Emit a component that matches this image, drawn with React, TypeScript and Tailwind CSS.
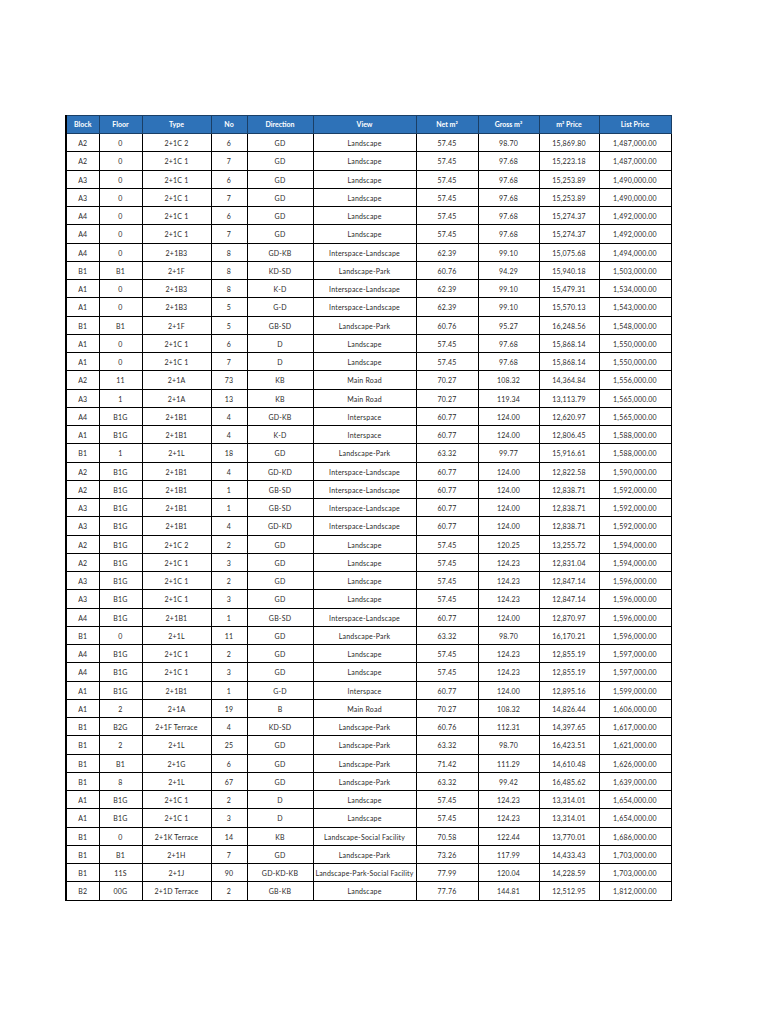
const headers = ['Block', 'Floor', 'Type', 'No', 'Direction', 'View', 'Net m²', 'Gross m²', 'm² Price', 'List Price'];
const widths = ['w-[33px]', 'w-[43px]', 'w-[69px]', 'w-[36px]', 'w-[66px]', 'w-[103px]', 'w-[62px]', 'w-[61px]', 'w-[60px]', 'w-[72px]'];

const rows: string[][] = [
  ['A2', '0', '2+1C 2', '6', 'GD', 'Landscape', '57.45', '98.70', '15,869.80', '1,487,000.00'],
  ['A2', '0', '2+1C 1', '7', 'GD', 'Landscape', '57.45', '97.68', '15,223.18', '1,487,000.00'],
  ['A3', '0', '2+1C 1', '6', 'GD', 'Landscape', '57.45', '97.68', '15,253.89', '1,490,000.00'],
  ['A3', '0', '2+1C 1', '7', 'GD', 'Landscape', '57.45', '97.68', '15,253.89', '1,490,000.00'],
  ['A4', '0', '2+1C 1', '6', 'GD', 'Landscape', '57.45', '97.68', '15,274.37', '1,492,000.00'],
  ['A4', '0', '2+1C 1', '7', 'GD', 'Landscape', '57.45', '97.68', '15,274.37', '1,492,000.00'],
  ['A4', '0', '2+1B3', '8', 'GD-KB', 'Interspace-Landscape', '62.39', '99.10', '15,075.68', '1,494,000.00'],
  ['B1', 'B1', '2+1F', '8', 'KD-SD', 'Landscape-Park', '60.76', '94.29', '15,940.18', '1,503,000.00'],
  ['A1', '0', '2+1B3', '8', 'K-D', 'Interspace-Landscape', '62.39', '99.10', '15,479.31', '1,534,000.00'],
  ['A1', '0', '2+1B3', '5', 'G-D', 'Interspace-Landscape', '62.39', '99.10', '15,570.13', '1,543,000.00'],
  ['B1', 'B1', '2+1F', '5', 'GB-SD', 'Landscape-Park', '60.76', '95.27', '16,248.56', '1,548,000.00'],
  ['A1', '0', '2+1C 1', '6', 'D', 'Landscape', '57.45', '97.68', '15,868.14', '1,550,000.00'],
  ['A1', '0', '2+1C 1', '7', 'D', 'Landscape', '57.45', '97.68', '15,868.14', '1,550,000.00'],
  ['A2', '11', '2+1A', '73', 'KB', 'Main Road', '70.27', '108.32', '14,364.84', '1,556,000.00'],
  ['A3', '1', '2+1A', '13', 'KB', 'Main Road', '70.27', '119.34', '13,113.79', '1,565,000.00'],
  ['A4', 'B1G', '2+1B1', '4', 'GD-KB', 'Interspace', '60.77', '124.00', '12,620.97', '1,565,000.00'],
  ['A1', 'B1G', '2+1B1', '4', 'K-D', 'Interspace', '60.77', '124.00', '12,806.45', '1,588,000.00'],
  ['B1', '1', '2+1L', '18', 'GD', 'Landscape-Park', '63.32', '99.77', '15,916.61', '1,588,000.00'],
  ['A2', 'B1G', '2+1B1', '4', 'GD-KD', 'Interspace-Landscape', '60.77', '124.00', '12,822.58', '1,590,000.00'],
  ['A2', 'B1G', '2+1B1', '1', 'GB-SD', 'Interspace-Landscape', '60.77', '124.00', '12,838.71', '1,592,000.00'],
  ['A3', 'B1G', '2+1B1', '1', 'GB-SD', 'Interspace-Landscape', '60.77', '124.00', '12,838.71', '1,592,000.00'],
  ['A3', 'B1G', '2+1B1', '4', 'GD-KD', 'Interspace-Landscape', '60.77', '124.00', '12,838.71', '1,592,000.00'],
  ['A2', 'B1G', '2+1C 2', '2', 'GD', 'Landscape', '57.45', '120.25', '13,255.72', '1,594,000.00'],
  ['A2', 'B1G', '2+1C 1', '3', 'GD', 'Landscape', '57.45', '124.23', '12,831.04', '1,594,000.00'],
  ['A3', 'B1G', '2+1C 1', '2', 'GD', 'Landscape', '57.45', '124.23', '12,847.14', '1,596,000.00'],
  ['A3', 'B1G', '2+1C 1', '3', 'GD', 'Landscape', '57.45', '124.23', '12,847.14', '1,596,000.00'],
  ['A4', 'B1G', '2+1B1', '1', 'GB-SD', 'Interspace-Landscape', '60.77', '124.00', '12,870.97', '1,596,000.00'],
  ['B1', '0', '2+1L', '11', 'GD', 'Landscape-Park', '63.32', '98.70', '16,170.21', '1,596,000.00'],
  ['A4', 'B1G', '2+1C 1', '2', 'GD', 'Landscape', '57.45', '124.23', '12,855.19', '1,597,000.00'],
  ['A4', 'B1G', '2+1C 1', '3', 'GD', 'Landscape', '57.45', '124.23', '12,855.19', '1,597,000.00'],
  ['A1', 'B1G', '2+1B1', '1', 'G-D', 'Interspace', '60.77', '124.00', '12,895.16', '1,599,000.00'],
  ['A1', '2', '2+1A', '19', 'B', 'Main Road', '70.27', '108.32', '14,826.44', '1,606,000.00'],
  ['B1', 'B2G', '2+1F Terrace', '4', 'KD-SD', 'Landscape-Park', '60.76', '112.31', '14,397.65', '1,617,000.00'],
  ['B1', '2', '2+1L', '25', 'GD', 'Landscape-Park', '63.32', '98.70', '16,423.51', '1,621,000.00'],
  ['B1', 'B1', '2+1G', '6', 'GD', 'Landscape-Park', '71.42', '111.29', '14,610.48', '1,626,000.00'],
  ['B1', '8', '2+1L', '67', 'GD', 'Landscape-Park', '63.32', '99.42', '16,485.62', '1,639,000.00'],
  ['A1', 'B1G', '2+1C 1', '2', 'D', 'Landscape', '57.45', '124.23', '13,314.01', '1,654,000.00'],
  ['A1', 'B1G', '2+1C 1', '3', 'D', 'Landscape', '57.45', '124.23', '13,314.01', '1,654,000.00'],
  ['B1', '0', '2+1K Terrace', '14', 'KB', 'Landscape-Social Facility', '70.58', '122.44', '13,770.01', '1,686,000.00'],
  ['B1', 'B1', '2+1H', '7', 'GD', 'Landscape-Park', '73.26', '117.99', '14,433.43', '1,703,000.00'],
  ['B1', '11S', '2+1J', '90', 'GD-KD-KB', 'Landscape-Park-Social Facility', '77.99', '120.04', '14,228.59', '1,703,000.00'],
  ['B2', '00G', '2+1D Terrace', '2', 'GB-KB', 'Landscape', '77.76', '144.81', '12,512.95', '1,812,000.00'],
];

export default function App() {
  return (
    <div className="min-h-[1024px] w-[768px] bg-white pt-[115px] pl-[65px]" style={{ fontFamily: 'Lato, "Open Sans", sans-serif' }}>
      <table className="table-fixed border-collapse border-l-2 border-black text-[7px] text-[#2a2a2a]">
        <colgroup>
          {widths.map((w, i) => (
            <col key={i} className={w} />
          ))}
        </colgroup>
        <thead>
          <tr className="h-[18px] bg-[#2e72b8]">
            {headers.map((h) => (
              <th key={h} className="border border-[#1a3f66] p-0 text-center font-bold text-white">
                {h}
              </th>
            ))}
          </tr>
        </thead>
        <tbody>
          {rows.map((r, i) => (
            <tr key={i} className="h-[18.25px]">
              {r.map((c, j) => (
                <td key={j} className="whitespace-nowrap border border-black p-0 pt-[2px] text-center leading-none tracking-[0.2px]">
                  {c}
                </td>
              ))}
            </tr>
          ))}
        </tbody>
      </table>
    </div>
  );
}
